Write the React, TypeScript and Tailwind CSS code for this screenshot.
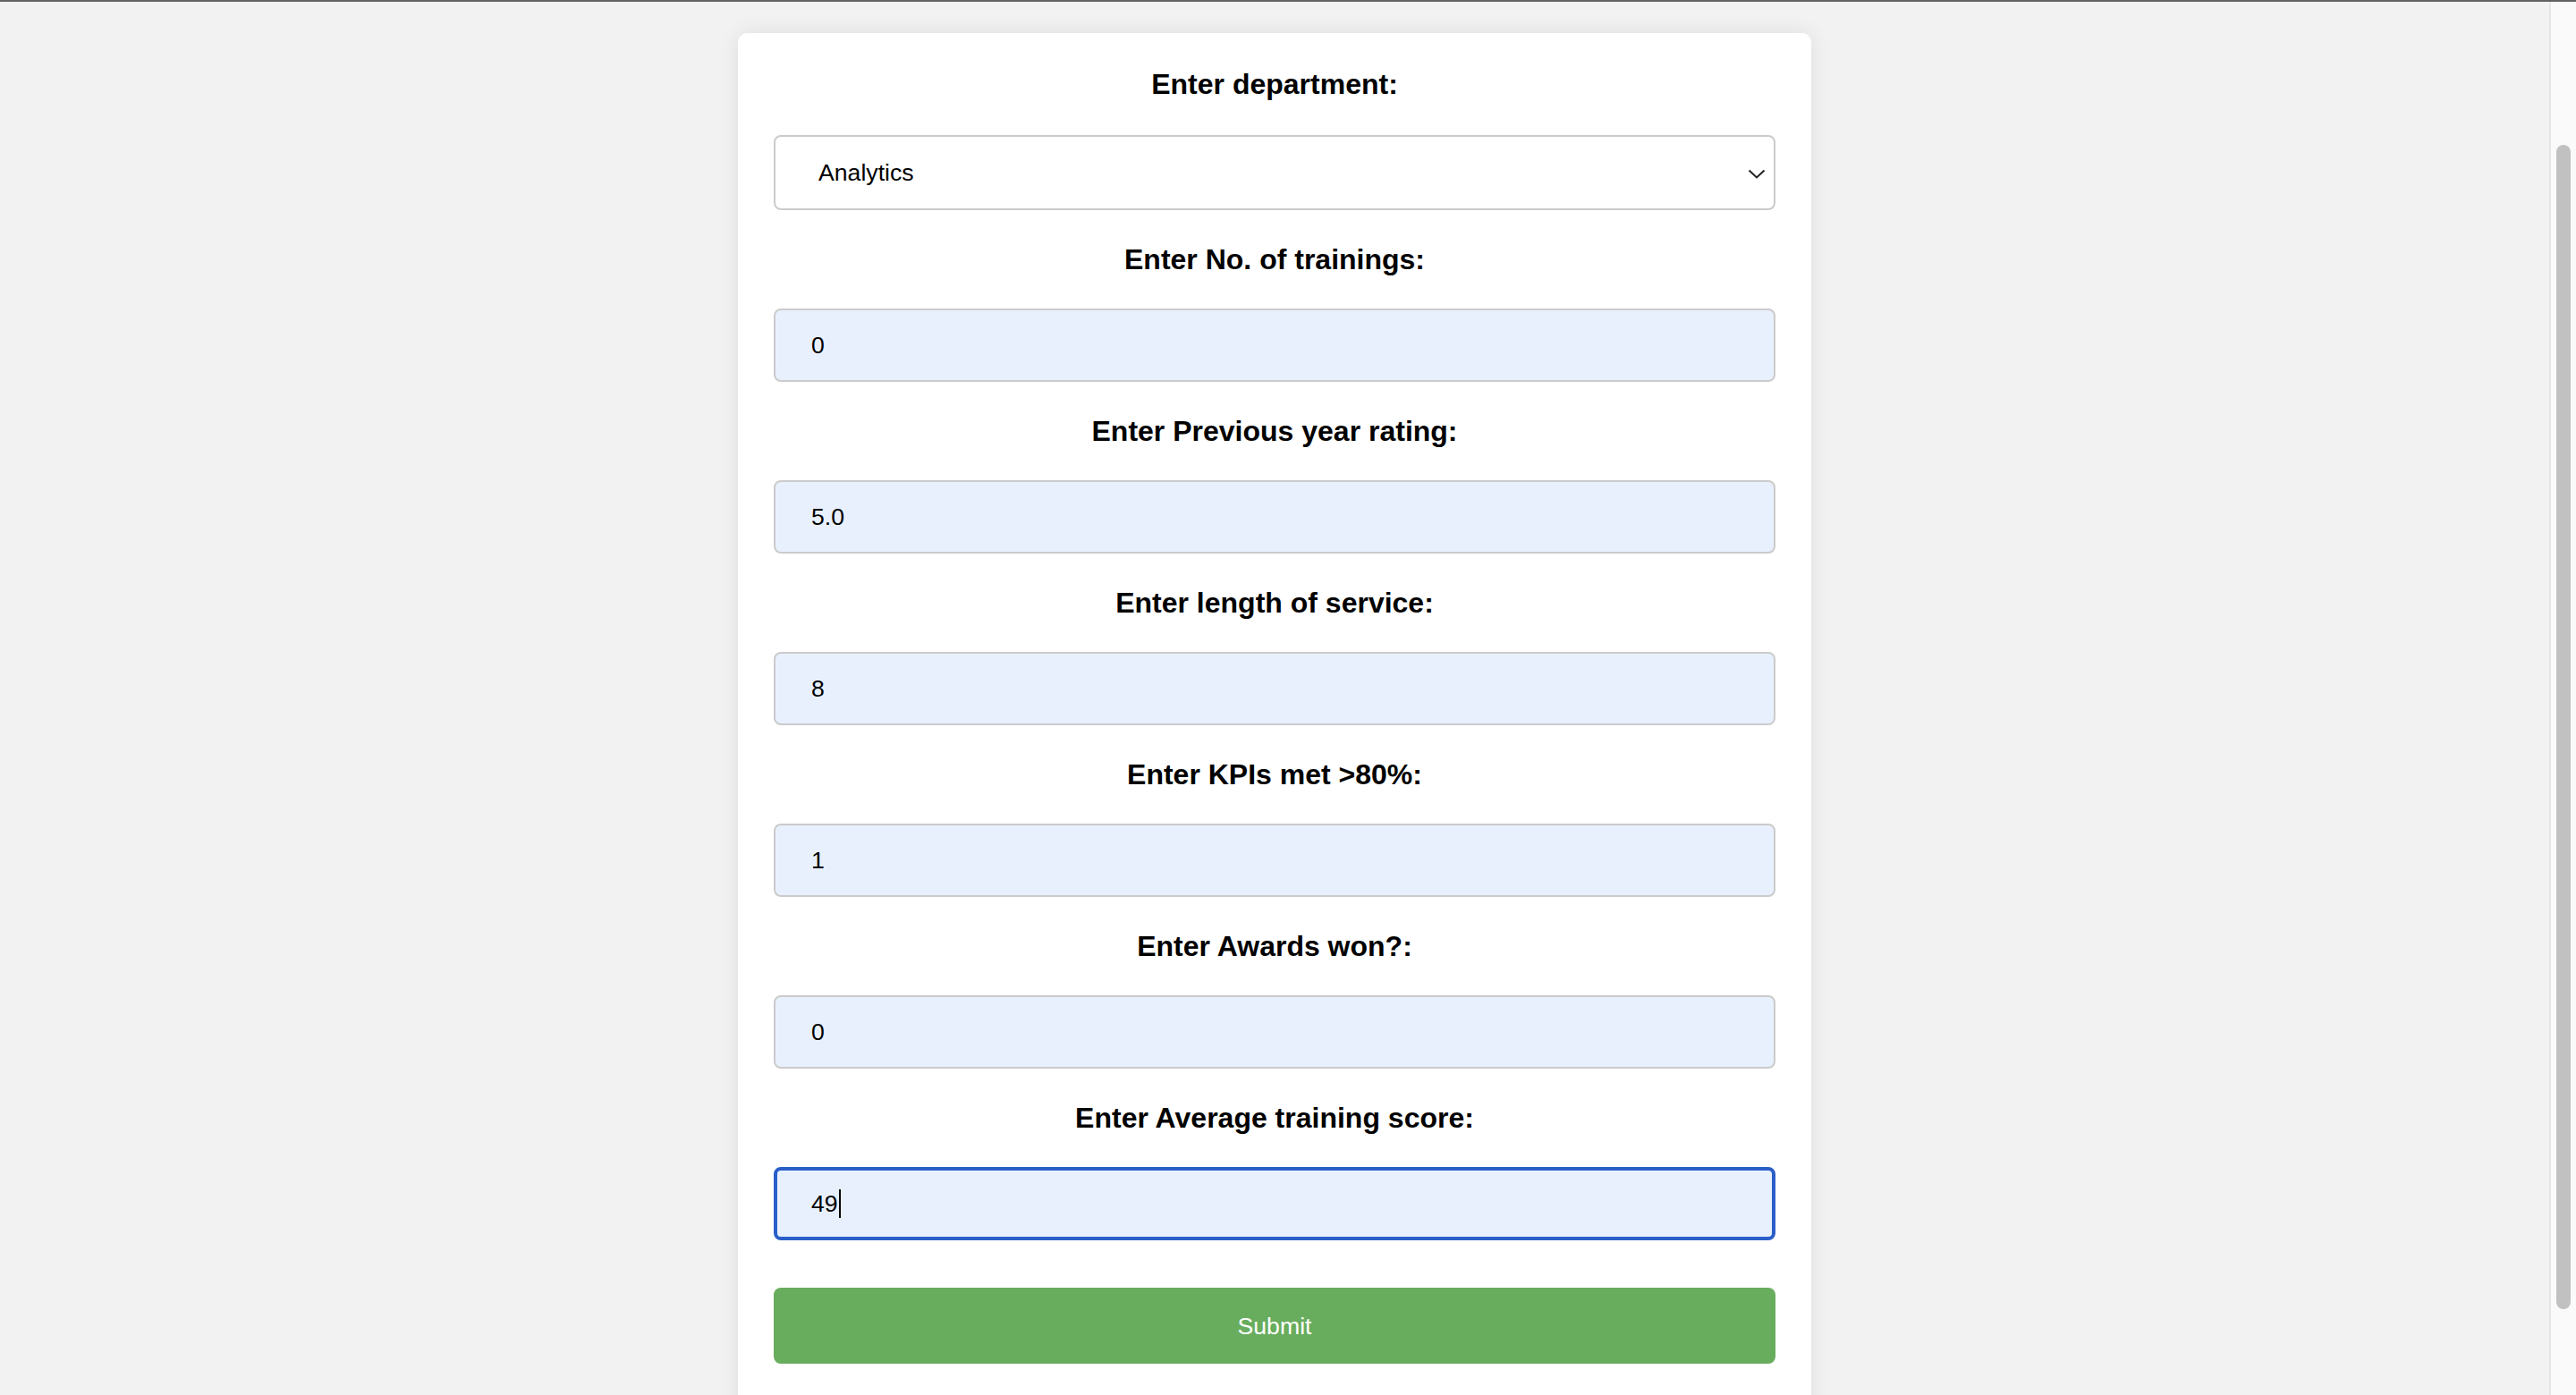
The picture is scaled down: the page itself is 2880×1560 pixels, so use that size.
import { type ReactNode } from 'react';

interface FieldProps {
  label: string;
  value: string;
  focused?: boolean;
}

const fields: FieldProps[] = [
  { label: 'Enter No. of trainings:', value: '0' },
  { label: 'Enter Previous year rating:', value: '5.0' },
  { label: 'Enter length of service:', value: '8' },
  { label: 'Enter KPIs met >80%:', value: '1' },
  { label: 'Enter Awards won?:', value: '0' },
  { label: 'Enter Average training score:', value: '49', focused: true },
];

function Label({ children }: { children: ReactNode }) {
  return (
    <label className="block text-center text-[32px] font-bold leading-[38px] text-black">
      {children}
    </label>
  );
}

function TextField({ label, value, focused = false }: FieldProps) {
  return (
    <>
      <Label>{label}</Label>
      <div
        className={`flex h-[82px] items-center rounded-[8px] bg-[#e8f0fe] text-[26.67px] text-black ${
          focused ? 'border-[4px] border-[#2a5ec8] pl-[38px]' : 'border-2 border-[#cbcbcb] pl-[40px]'
        }`}
      >
        <span>{value}</span>
        {focused && <span className="ml-[1px] h-[32px] w-[2px] bg-black" />}
      </div>
    </>
  );
}

function SelectField() {
  return (
    <>
      <Label>Enter department:</Label>
      <div className="mt-[2px] flex h-[84px] items-center justify-between rounded-[8px] border-2 border-[#cbcbcb] bg-white pl-[48px] pr-[8px] text-[26.67px] text-black">
        <span>Analytics</span>
        <svg width="20" height="11" viewBox="0 0 20 11" fill="none" className="mr-[1px] mt-[2px]">
          <polyline points="1.5,1.5 10,9.5 18.5,1.5" stroke="#222" strokeWidth="2" />
        </svg>
      </div>
    </>
  );
}

export default function App() {
  return (
    <div className="flex h-screen flex-col overflow-hidden bg-[#f2f2f2] font-['Liberation_Sans',Arial,sans-serif]">
      <div className="h-[2px] shrink-0 bg-[#636363]" />
      <div className="flex min-h-0 flex-1">
        <main className="flex min-w-0 flex-1 justify-center pt-[35px]">
          <form className="flex w-[1200px] shrink-0 flex-col gap-[36px] self-start rounded-[10px] bg-white px-[40px] pb-[60px] pt-[38px] shadow-[0_0_24px_rgba(0,0,0,0.09)]">
            <SelectField />
            {fields.map((field) => (
              <TextField key={field.label} {...field} />
            ))}
            <button
              type="button"
              className="mt-[17px] h-[85px] rounded-[8px] bg-[#68ad5d] text-[26.67px] text-white"
            >
              Submit
            </button>
          </form>
        </main>
        <aside className="flex w-[30px] shrink-0 border-l-2 border-[#e6e6e6] bg-[#fafafa] pl-[6px] pt-[160px]">
          <div className="h-[1302px] w-[16px] rounded-full bg-[#c1c1c1]" />
        </aside>
      </div>
    </div>
  );
}
